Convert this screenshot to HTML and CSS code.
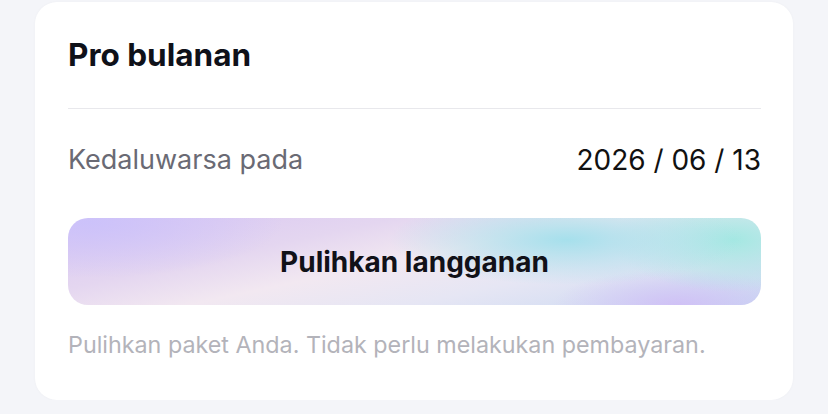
FILE: index.html
```html
<!DOCTYPE html>
<html lang="id">
<head>
    <meta charset="UTF-8">
    <meta name="viewport" content="width=device-width, initial-scale=1.0">
    <title>Pro bulanan</title>
    <link rel="stylesheet" href="styles.css">
</head>
<body>
    <div class="card">
        <h1 class="plan-title">Pro bulanan</h1>

        <div class="info-row">
            <span class="info-label">Kedaluwarsa pada</span>
            <span class="info-value">2026 / 06 / 13</span>
        </div>

        <button class="restore-button">Pulihkan langganan</button>

        <p class="note">Pulihkan paket Anda. Tidak perlu melakukan pembayaran.</p>
    </div>
</body>
</html>
```

FILE: styles.css
```css
body {
    margin: 0;
    padding: 2px 35px 0;
    background-color: #f4f5f9;
    font-family: Inter, 'Noto Sans', sans-serif;
    color: #111118;
}

.card {
    background-color: #fff;
    border-radius: 22px;
    padding: 0 32px 0 33px;
    height: 398px;
    box-sizing: border-box;
    box-shadow: 0 0 3px rgba(0, 0, 0, 0.03);
}

.plan-title {
    margin: 0;
    padding: 34px 0 34px;
    font-size: 31.5px;
    line-height: 38px;
    font-weight: 700;
    color: #0f1119;
    border-bottom: 1px solid #e8e8ec;
}

.info-row {
    display: flex;
    justify-content: space-between;
    align-items: center;
    padding: 34px 0 0;
    line-height: 34px;
}

.info-label {
    font-size: 27px;
    color: #6a6a74;
}

.info-value {
    font-size: 28px;
    color: #111;
}

.restore-button {
    display: block;
    width: 100%;
    height: 87px;
    margin-top: 41px;
    border: none;
    border-radius: 20px;
    font-family: inherit;
    font-size: 28px;
    font-weight: 700;
    color: #111118;
    background:
        radial-gradient(ellipse 32% 65% at 72% 25%, rgba(166, 224, 236, 1), transparent 80%),
        radial-gradient(ellipse 22% 75% at 96% 25%, rgba(164, 232, 226, 1), transparent 80%),
        radial-gradient(ellipse 24% 55% at 88% 100%, rgba(208, 190, 246, 0.9), transparent 75%),
        radial-gradient(ellipse 35% 80% at 3% 5%, rgba(204, 194, 250, 1), transparent 80%),
        linear-gradient(168deg, #d8c6f2 0%, #e4d6f0 30%, #f2e8f1 48%, #e6e6f4 68%, #c8d8f2 100%);
}

.note {
    margin: 24px 0 0;
    font-size: 23.3px;
    line-height: 32px;
    color: #b3b3ba;
}
```
